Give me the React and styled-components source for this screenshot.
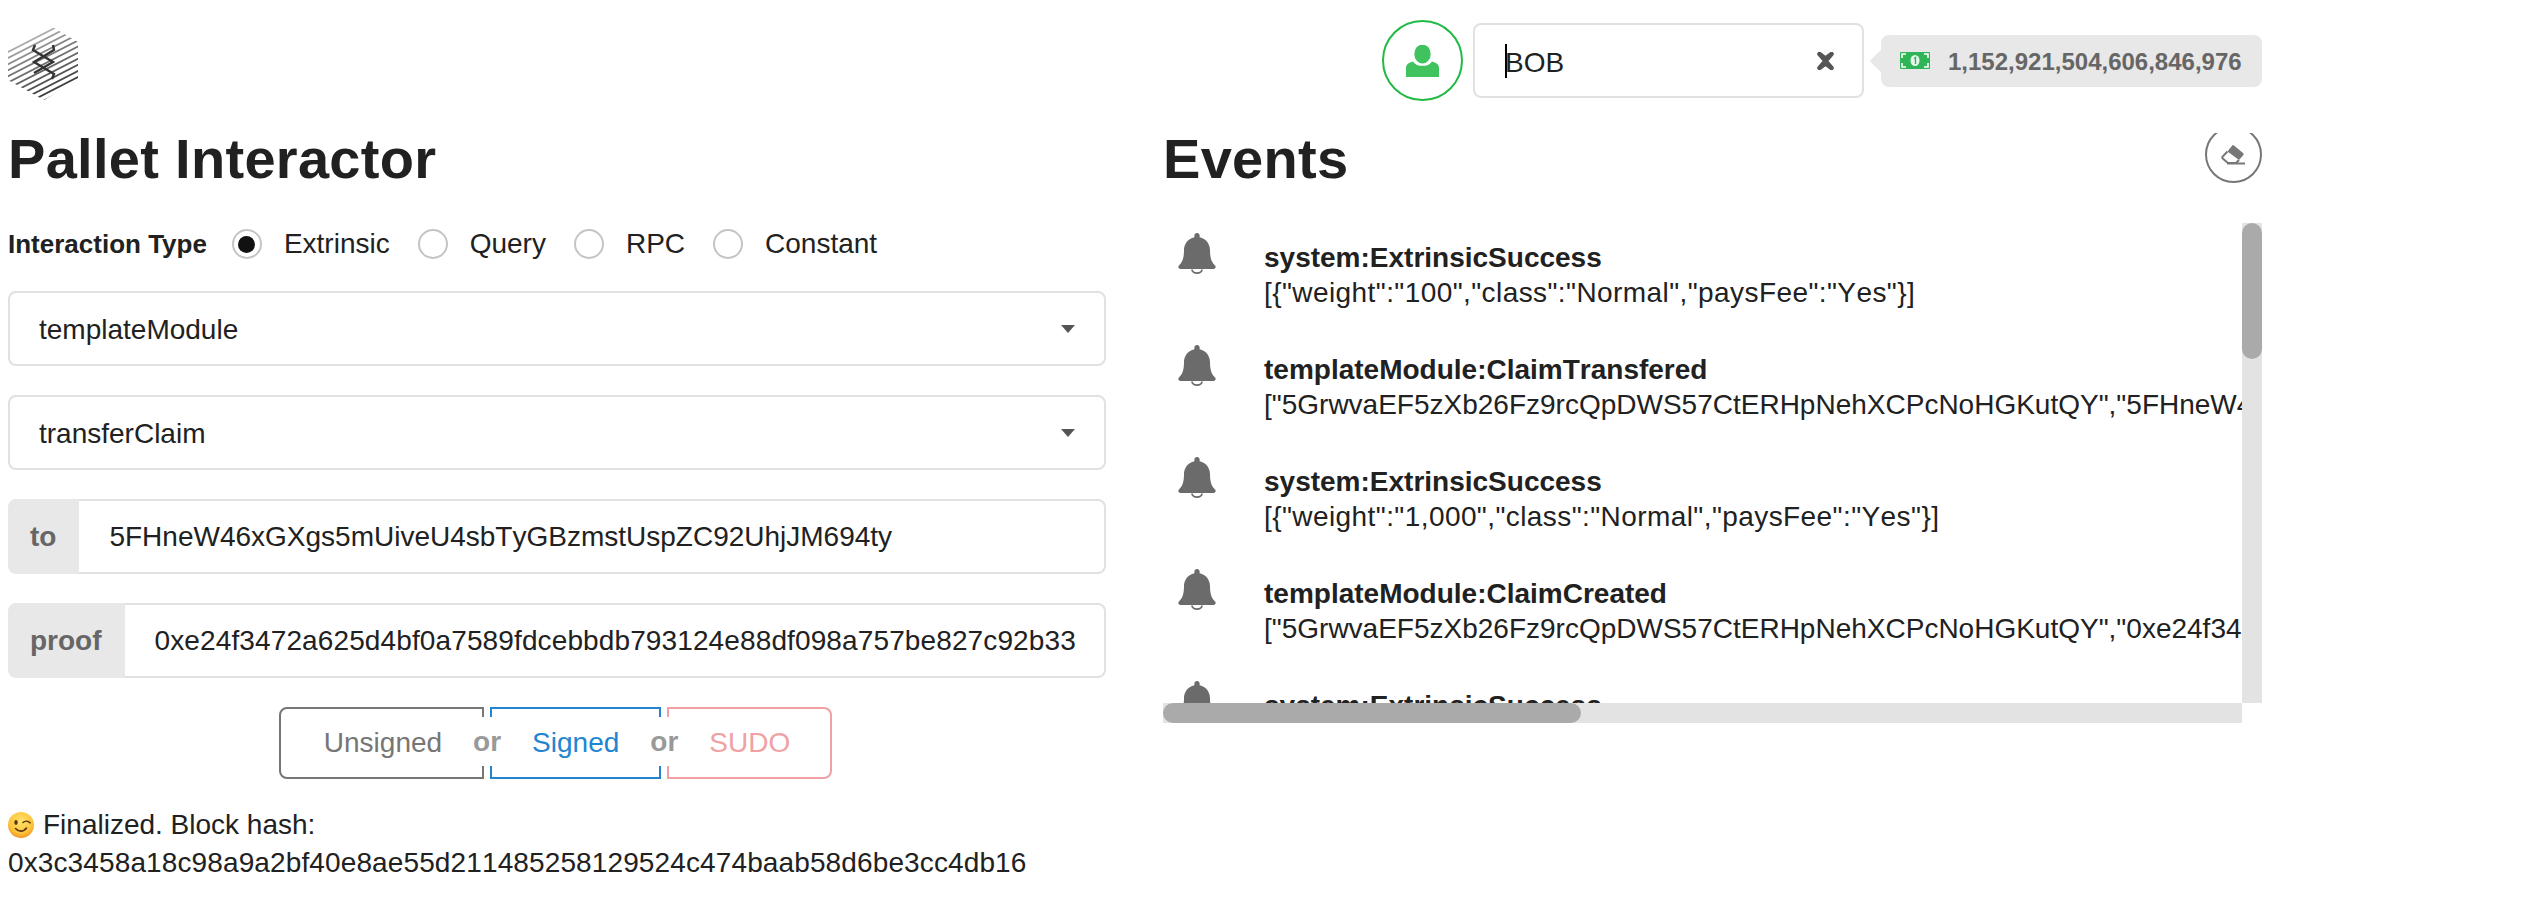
import React from 'react';
import styled, {createGlobalStyle} from 'styled-components';

const ALICE = '5GrwvaEF5zXb26Fz9rcQpDWS57CtERHpNehXCPcNoHGKutQY';
const BOB = '5FHneW46xGXgs5mUiveU4sbTyGBzmstUspZC92UhjJM694ty';
const PROOF = '0xe24f3472a625d4bf0a7589fdcebbdb793124e88df098a757be827c92b33d5a1e8f7c64b02e9d3f10';

const success = weight => ({
  title: 'system:ExtrinsicSuccess',
  body: `[{"weight":"${weight}","class":"Normal","paysFee":"Yes"}]`,
  tracking: '0.42px',
});

const EVENTS = [
  success('100'),
  {title: 'templateModule:ClaimTransfered', body: `["${ALICE}","${BOB}"]`},
  success('1,000'),
  {title: 'templateModule:ClaimCreated', body: `["${ALICE}","${PROOF}"]`},
  success('100'),
];

function Logo() {
  const lines = [];
  for (let i = 0; i < 21; i++) {
    lines.push(-8 + i * 6.1);
  }
  return (
    <LogoSvg viewBox="0 0 70 78">
      <defs>
        <clipPath id="hex">
          <polygon points="36,0 70,20 70,58 36,78 0,58 0,20" />
        </clipPath>
        <linearGradient id="hatch" gradientUnits="userSpaceOnUse" x1="10" y1="0" x2="45" y2="78">
          <stop offset="0" stopColor="#e4e4e4" />
          <stop offset="0.45" stopColor="#808080" />
          <stop offset="1" stopColor="#2e2e2e" />
        </linearGradient>
      </defs>
      <g clipPath="url(#hex)">
        {lines.map(y => (
          <path key={y} d={`M-4 ${y + 40}L74 ${y}`} stroke="url(#hatch)" strokeWidth="1.8" />
        ))}
      </g>
      <path
        d="M27 23L25 28 45 40 26 51M45 23L46 28 26 40 46 52 44 57"
        fill="none"
        stroke="#333"
        strokeWidth="2.4"
      />
    </LogoSvg>
  );
}

function UserIcon() {
  return (
    <svg width="33" height="32" viewBox="0 0 33 32">
      <ellipse cx="16.5" cy="9" rx="8.2" ry="9.4" fill="#40c25f" />
      <path d="M0 32v-9c0-4 3-5.5 7-6.6 2 3.2 5.4 4.4 9.5 4.4s7.500-1.200 9.500-4.400c4 1.100 7 2.600 7 6.600v9z" fill="#40c25f" />
    </svg>
  );
}

function MoneyIcon() {
  return (
    <svg width="30" height="17" viewBox="0 0 30 17">
      <rect width="30" height="17" rx="1" fill="#2fb457" />
      <path d="M2 6V2h4M24 2h4v4M28 11v4h-4M6 15H2v-4" fill="none" stroke="#fff" strokeWidth="1.6" />
      <ellipse cx="15" cy="8.500" rx="4.500" ry="5.500" fill="#e6f6ea" />
      <path d="M14 6.500l1.500-1v6.500" fill="none" stroke="#2fb457" strokeWidth="1.400" />
    </svg>
  );
}

function ClearIcon() {
  return (
    <svg width="19" height="18" viewBox="0 0 19 18">
      <path d="M3.500 2l6 4.500 6-4.500M3.500 16l6-4.500 6 4.500M3.500 2l12 14M15.500 2l-12 14" fill="none" stroke="#555" strokeWidth="4.500" strokeLinecap="round" />
    </svg>
  );
}

function EraserIcon() {
  return (
    <svg width="25" height="21" viewBox="0 0 25 21">
      <path d="M13 1.500l9 7.500a1.500 1.500 0 0 1 .2 2.200L18 16 6.500 7.500 11 1.800a1.400 1.400 0 0 1 2-.3z" fill="#777" />
      <path d="M6.500 7.500L1.600 12.600a1.300 1.300 0 0 0 .1 1.900L7 19h8l3-3" fill="none" stroke="#777" strokeWidth="2" />
      <path d="M6 19.500h18" stroke="#777" strokeWidth="2" />
    </svg>
  );
}

function BellIcon() {
  return (
    <BellSvg viewBox="0 0 38 41">
      <path
        d="M19 0a2.600 2.600 0 0 1 2.600 2.600v1.600C28 5.400 32 11 32 17c0 9 2 12.500 5 15.500 1.400 1.400.6 3.500-1.600 3.500H2.600C.4 36-.4 33.900 1 32.500 4 29.500 6 26 6 17 6 11 10 5.400 16.400 4.200V2.600A2.600 2.600 0 0 1 19 0z"
        fill="#6b6b6b"
      />
      <path d="M14 36.500a5 3.600 0 0 0 10 0" fill="none" stroke="#6b6b6b" strokeWidth="1.800" />
    </BellSvg>
  );
}

function WinkEmoji() {
  return (
    <EmojiSvg viewBox="0 0 26 26">
      <defs>
        <radialGradient id="face" cx="0.5" cy="0.35" r="0.7">
          <stop offset="0" stopColor="#ffe36a" />
          <stop offset="0.65" stopColor="#fdc33c" />
          <stop offset="1" stopColor="#f08a1d" />
        </radialGradient>
      </defs>
      <circle cx="13" cy="13" r="13" fill="url(#face)" />
      <ellipse cx="8" cy="10.500" rx="1.700" ry="2.400" fill="#5a3410" />
      <path d="M15 10.500c2-1.800 5-1.800 7 .3" fill="none" stroke="#5a3410" strokeWidth="1.600" strokeLinecap="round" />
      <path d="M7.500 16.500c3 3.600 8 3.600 11-.4" fill="none" stroke="#5a3410" strokeWidth="1.600" strokeLinecap="round" />
    </EmojiSvg>
  );
}

function Radio({checked, children}) {
  return (
    <RadioItem>
      <RadioCircle>{checked && <RadioDot />}</RadioCircle>
      {children}
    </RadioItem>
  );
}

function App() {
  return (
    <Page>
      <GlobalStyle />
      <TopBar>
        <Logo />
        <Account>
          <Avatar>
            <UserIcon />
          </Avatar>
          <AccountSelect>
            <AccountText>
              <Caret />
              BOB
            </AccountText>
            <ClearIcon />
          </AccountSelect>
          <Balance>
            <MoneyIcon />
            <BalanceText>1,152,921,504,606,846,976</BalanceText>
          </Balance>
        </Account>
      </TopBar>
      <Columns>
        <section>
          <HeadingRow>
            <Title>Pallet Interactor</Title>
          </HeadingRow>
          <RadioRow>
            <RadioLabel>Interaction Type</RadioLabel>
            <Radio checked>Extrinsic</Radio>
            <Radio>Query</Radio>
            <Radio>RPC</Radio>
            <Radio>Constant</Radio>
          </RadioRow>
          <Form>
            <Select>
              templateModule
              <Arrow />
            </Select>
            <Select>
              transferClaim
              <Arrow />
            </Select>
            <Field>
              <FieldLabel>to</FieldLabel>
              <FieldInput readOnly value={BOB} />
            </Field>
            <Field>
              <FieldLabel>proof</FieldLabel>
              <FieldInput readOnly value={PROOF} $tracking="0.12px" />
            </Field>
            <Buttons>
              <TxButton $color="#767676" $radius="8px 0 0 8px" $padLeft="43px">
                Unsigned
                <Or>or</Or>
              </TxButton>
              <TxButton $color="#2185d0" $radius="0">
                Signed
                <Or>or</Or>
              </TxButton>
              <TxButton $color="#f0a1a3" $radius="0 8px 8px 0">
                SUDO
              </TxButton>
            </Buttons>
          </Form>
          <Status>
            <WinkEmoji />
            Finalized. Block hash:
            <br />
            <BlockHash>0x3c3458a18c98a9a2bf40e8ae55d211485258129524c474baab58d6be3cc4db16</BlockHash>
          </Status>
        </section>
        <section>
          <HeadingRow>
            <Title>Events</Title>
            <EraserClip>
              <EraserButton>
                <EraserIcon />
              </EraserButton>
            </EraserClip>
          </HeadingRow>
          <EventFrame>
            <EventViewport>
              {EVENTS.map((event, index) => (
                <EventRow key={index}>
                  <BellIcon />
                  <div>
                    <EventTitle>{event.title}</EventTitle>
                    <EventBody $tracking={event.tracking}>{event.body}</EventBody>
                  </div>
                </EventRow>
              ))}
            </EventViewport>
            <VerticalTrack>
              <VerticalThumb />
            </VerticalTrack>
            <HorizontalTrack>
              <HorizontalThumb />
            </HorizontalTrack>
          </EventFrame>
        </section>
      </Columns>
    </Page>
  );
}

const GlobalStyle = createGlobalStyle`
  html, body {
    margin: 0;
    background: #fff;
    overflow: hidden;
  }
  body {
    font-family: "Liberation Sans", Arial, sans-serif;
    font-size: 28px;
    line-height: 36px;
    color: #212121;
  }
  h1 {
    margin: 0;
  }
`;

const Page = styled.div`
  width: 2254px;
  padding-left: 8px;
`;

const TopBar = styled.header`
  display: flex;
  justify-content: space-between;
  align-items: flex-start;
  height: 123px;
  padding-top: 20px;
  box-sizing: border-box;
`;

const LogoSvg = styled.svg`
  width: 70px;
  height: 78px;
  margin-top: 2px;
`;

const Account = styled.div`
  display: flex;
  align-items: center;
`;

const Avatar = styled.div`
  display: flex;
  align-items: center;
  justify-content: center;
  width: 81px;
  height: 81px;
  box-sizing: border-box;
  border: 2px solid #21ba45;
  border-radius: 50%;
  margin-right: 10px;
`;

const AccountSelect = styled.div`
  display: flex;
  align-items: center;
  justify-content: space-between;
  width: 391px;
  height: 75px;
  box-sizing: border-box;
  padding: 0 27px 0 30px;
  border: 2px solid #e0e1e1;
  border-radius: 8px;
`;

const AccountText = styled.span`
  position: relative;
  top: 2px;
`;

const Caret = styled.i`
  position: absolute;
  left: 0;
  top: -1px;
  width: 1.5px;
  height: 34px;
  background: #000;
`;

const Balance = styled.div`
  position: relative;
  display: flex;
  align-items: center;
  gap: 18px;
  width: 381px;
  height: 52px;
  box-sizing: border-box;
  margin-left: 17px;
  padding-left: 19px;
  background: #e8e8e8;
  border-radius: 8px;
  color: #666;
  font-size: 24px;
  font-weight: 700;

  &::before {
    content: '';
    position: absolute;
    left: -8px;
    top: 18px;
    width: 16px;
    height: 16px;
    background: #e8e8e8;
    transform: rotate(45deg);
  }
`;

const BalanceText = styled.span`
  position: relative;
  top: 1px;
`;

const Columns = styled.main`
  display: grid;
  grid-template-columns: 1098px 1099px;
  column-gap: 57px;
`;

const HeadingRow = styled.div`
  display: flex;
  justify-content: space-between;
  height: 70px;
`;

const Title = styled.h1`
  font-size: 56px;
  line-height: 72px;
  font-weight: 700;
  letter-spacing: 0.3px;
`;

const EraserClip = styled.div`
  height: 50px;
  margin-top: 10px;
  overflow: hidden;
`;

const EraserButton = styled.div`
  display: flex;
  align-items: center;
  justify-content: center;
  width: 57px;
  height: 57px;
  box-sizing: border-box;
  margin-top: -7px;
  border: 2px solid #767676;
  border-radius: 50%;
`;

const RadioRow = styled.div`
  display: flex;
  align-items: center;
  gap: 28px;
  height: 36px;
  margin-top: 33px;
`;

const RadioLabel = styled.span`
  margin-right: -3px;
  font-size: 26px;
  font-weight: 700;
`;

const RadioItem = styled.label`
  display: flex;
  align-items: center;
  gap: 22px;
`;

const RadioCircle = styled.span`
  display: flex;
  align-items: center;
  justify-content: center;
  width: 30px;
  height: 30px;
  box-sizing: border-box;
  background: #fff;
  border: 2px solid #c4c4c4;
  border-radius: 50%;
`;

const RadioDot = styled.span`
  width: 17px;
  height: 17px;
  background: #111;
  border-radius: 50%;
`;

const Form = styled.div`
  display: flex;
  flex-direction: column;
  gap: 29px;
  margin-top: 29px;
`;

const Select = styled.div`
  display: flex;
  align-items: center;
  justify-content: space-between;
  height: 75px;
  box-sizing: border-box;
  padding: 2px 29px 0;
  border: 2px solid #e0e1e1;
  border-radius: 8px;
`;

const Arrow = styled.span`
  width: 0;
  height: 0;
  margin-top: -2px;
  border-left: 7px solid transparent;
  border-right: 7px solid transparent;
  border-top: 8px solid #555;
`;

const Field = styled.div`
  display: flex;
  height: 75px;
`;

const FieldLabel = styled.label`
  display: flex;
  align-items: center;
  padding: 0 23px 0 22px;
  background: #e8e8e8;
  border-radius: 8px 0 0 8px;
  color: #666;
  font-weight: 700;
`;

const FieldInput = styled.input`
  flex: 1;
  min-width: 0;
  padding: 0 29px 0 30px;
  border: 2px solid #e0e1e1;
  border-left: none;
  border-radius: 0 8px 8px 0;
  outline: none;
  font: inherit;
  font-kerning: none;
  letter-spacing: ${p => p.$tracking || 'normal'};
  color: #212121;
`;

const Buttons = styled.div`
  display: flex;
  justify-content: center;
  gap: 6px;
  padding-right: 3px;
`;

const TxButton = styled.button`
  position: relative;
  height: 72px;
  padding: 0 40px 0 ${p => p.$padLeft || '40px'};
  background: #fff;
  border: 2px solid ${p => p.$color};
  border-radius: ${p => p.$radius};
  color: ${p => p.$color};
  font: inherit;
`;

const Or = styled.span`
  position: absolute;
  z-index: 1;
  top: 8px;
  right: -20px;
  width: 30px;
  height: 49px;
  padding-left: 6px;
  background: #fff;
  color: #999;
  font-weight: 700;
  line-height: 49px;
  text-align: center;
`;

const Status = styled.p`
  margin: 27px 0 0;
  line-height: 38px;
  font-kerning: none;
`;

const BlockHash = styled.span`
  letter-spacing: 0.12px;
`;

const EmojiSvg = styled.svg`
  width: 26px;
  height: 26px;
  margin-right: 9px;
  vertical-align: -4px;
`;

const EventFrame = styled.div`
  display: grid;
  grid-template-columns: 1079px 20px;
  grid-template-rows: 480px 20px;
  margin-top: 30px;
`;

const EventViewport = styled.div`
  overflow: hidden;
  font-kerning: none;
`;

const VerticalTrack = styled.div`
  background: #e3e3e3;
`;

const VerticalThumb = styled.div`
  height: 136px;
  background: #aaa;
  border-radius: 10px;
`;

const HorizontalTrack = styled.div`
  background: #e3e3e3;
`;

const HorizontalThumb = styled.div`
  width: 418px;
  height: 20px;
  background: #aaa;
  border-radius: 10px;
`;

const EventRow = styled.div`
  display: flex;
  gap: 48px;
  height: 112px;
  box-sizing: border-box;
  padding: 10px 0 0 15px;
  white-space: nowrap;
`;

const BellSvg = styled.svg`
  flex: none;
  width: 38px;
  height: 41px;
`;

const EventTitle = styled.div`
  margin-top: 7px;
  line-height: 35px;
  font-weight: 700;
`;

const EventBody = styled.div`
  letter-spacing: ${p => p.$tracking || 'normal'};
`;

export default App;
